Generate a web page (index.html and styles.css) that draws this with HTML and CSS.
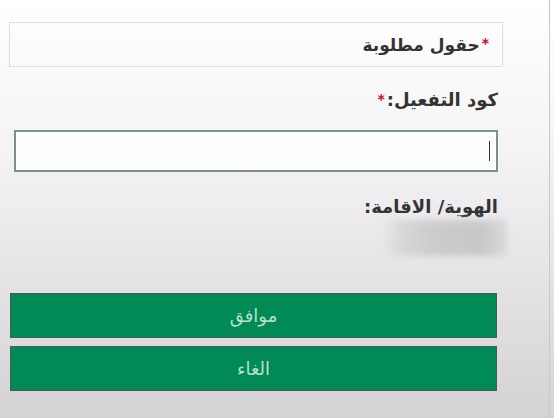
FILE: index.html
```html
<!DOCTYPE html>
<html lang="ar" dir="rtl">
<head>
<meta charset="utf-8">
<link rel="stylesheet" href="styles.css">
</head>
<body>
<div class="page">
  <div class="required-box"><span class="star">*</span>حقول مطلوبة</div>
  <label class="label">كود التفعيل:<span class="star">*</span></label>
  <div class="input"><span class="caret"></span></div>
  <label class="label label-id">الهوية/ الاقامة:</label>
  <div class="blurred"></div>
  <div class="buttons">
    <button class="btn">موافق</button>
    <button class="btn">الغاء</button>
  </div>
</div>
</body>
</html>
```
FILE: styles.css
```css
html, body {
  margin: 0;
  padding: 0;
  height: 100%;
}
body {
  background: linear-gradient(to bottom, #ffffff 0%, #f7f6f7 30%, #e6e4e7 65%, #d4d2d5 100%);
  font-family: "DejaVu Sans", "Noto Sans", sans-serif;
  color: #2f2f2f;
  overflow: hidden;
}
.page {
  width: 550px;
  height: 418px;
  margin-right: 4px;
  border-right: 1px solid #c9c7ca;
  box-sizing: border-box;
  padding: 22px 46px 0 0;
  display: flex;
  flex-direction: column;
  align-items: stretch;
}
.required-box {
  margin-left: 9px;
  height: 45px;
  box-sizing: border-box;
  border: 1px dotted #c6c6c6;
  padding: 0 11px 0 0;
  display: flex;
  align-items: center;
  font-size: 17px;
  font-weight: bold;
  color: #333;
}
.star {
  color: #d0021b;
  font-size: 14px;
  margin: 0 2px;
  position: relative;
  top: -2px;
}
.label {
  margin-top: 20px;
  padding-right: 5px;
  font-size: 18px;
  font-weight: bold;
  color: #333;
  line-height: 26px;
}
.input {
  margin: 16px 5px 0 0;
  margin-left: 14px;
  height: 42px;
  box-sizing: border-box;
  border: 2px solid #7c9089;
  background: #fdfdfe;
  display: flex;
  align-items: center;
  padding-right: 6px;
}
.caret {
  width: 1px;
  height: 20px;
  background: #333;
}
.label-id {
  margin-top: 22px;
}
.blurred {
  align-self: flex-start;
  width: 124px;
  height: 36px;
  margin-right: -4px;
  background: linear-gradient(to left, #dad9dc 0%, #c9c7ca 20%, #cdcbce 60%, #d8d6d9 85%, rgba(230,228,231,0) 100%);
  filter: blur(3px);
}
.buttons {
  margin: 37px 6px 0 0;
  margin-left: 10px;
  display: flex;
  flex-direction: column;
  gap: 8px;
}
.btn {
  height: 45px;
  border: 1px solid #4a5a52;
  background: #008b56;
  color: #b9dfc8;
  font-family: "DejaVu Sans", "Noto Sans", sans-serif;
  font-size: 18px;
  padding: 0;
}
```
